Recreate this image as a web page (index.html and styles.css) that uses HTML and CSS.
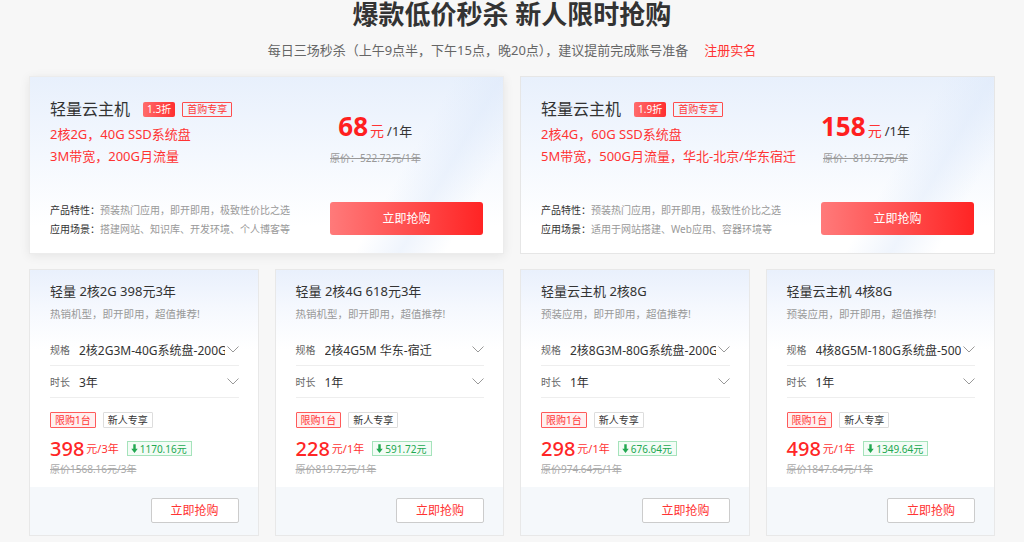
FILE: index.html
```html
<!DOCTYPE html>
<html>

<head>
    <meta charset="utf-8">
    <link rel="stylesheet" href="styles.css">
</head>

<body>
    <div class="page">
        <h1 class="title">爆款低价秒杀 新人限时抢购</h1>
        <p class="subtitle">每日三场秒杀（上午9点半，下午15点，晚20点），建议提前完成账号准备<a class="register">注册实名</a></p>

        <div class="big-row">
            <div class="big-card raised">
                <div class="big-info">
                    <div class="big-title">轻量云主机<span class="tag-fill">1.3折</span><span class="tag-line">首购专享</span></div>
                    <div class="spec">2核2G，40G SSD系统盘</div>
                    <div class="spec">3M带宽，200G月流量</div>
                </div>
                <div class="big-price">
                    <div class="price-now"><b>68</b><span class="unit">元</span><span class="per">/1年</span></div>
                    <div class="price-old">原价：522.72元/1年</div>
                </div>
                <div class="features">
                    <div><span class="feat-label">产品特性：</span>预装热门应用，即开即用，极致性价比之选</div>
                    <div><span class="feat-label">应用场景：</span>搭建网站、知识库、开发环境、个人博客等</div>
                </div>
                <a class="buy-main">立即抢购</a>
            </div>
            <div class="big-card">
                <div class="big-info">
                    <div class="big-title">轻量云主机<span class="tag-fill">1.9折</span><span class="tag-line">首购专享</span></div>
                    <div class="spec">2核4G，60G SSD系统盘</div>
                    <div class="spec">5M带宽，500G月流量，华北-北京/华东宿迁</div>
                </div>
                <div class="big-price">
                    <div class="price-now"><b>158</b><span class="unit">元</span><span class="per">/1年</span></div>
                    <div class="price-old">原价：819.72元/年</div>
                </div>
                <div class="features">
                    <div><span class="feat-label">产品特性：</span>预装热门应用，即开即用，极致性价比之选</div>
                    <div><span class="feat-label">应用场景：</span>适用于网站搭建、Web应用、容器环境等</div>
                </div>
                <a class="buy-main">立即抢购</a>
            </div>
        </div>

        <div class="small-row">
            <div class="small-card">
                <div class="small-body">
                    <div class="small-title">轻量 2核2G 398元3年</div>
                    <div class="small-desc">热销机型，即开即用，超值推荐!</div>
                    <div class="opt"><span class="opt-label">规格</span><span class="opt-value">2核2G3M-40G系统盘-200GB月流量</span><svg class="chev" viewBox="0 0 12 7"><polyline points="0.5,0.5 6,6 11.5,0.5" /></svg></div>
                    <div class="opt"><span class="opt-label">时长</span><span class="opt-value">3年</span><svg class="chev" viewBox="0 0 12 7"><polyline points="0.5,0.5 6,6 11.5,0.5" /></svg></div>
                    <div class="tags"><span class="tag-limit">限购1台</span><span class="tag-new">新人专享</span></div>
                    <div class="small-price"><b>398</b><span class="small-unit">元/3年</span><span class="save"><svg viewBox="0 0 8 10"><path d="M2.6 0h2.8v5.2h2.3L4 10 0.3 5.2h2.3z" /></svg>1170.16元</span></div>
                    <div class="small-old">原价1568.16元/3年</div>
                </div>
                <div class="small-foot"><a class="buy-small">立即抢购</a></div>
            </div>
            <div class="small-card">
                <div class="small-body">
                    <div class="small-title">轻量 2核4G 618元3年</div>
                    <div class="small-desc">热销机型，即开即用，超值推荐!</div>
                    <div class="opt"><span class="opt-label">规格</span><span class="opt-value">2核4G5M 华东-宿迁</span><svg class="chev" viewBox="0 0 12 7"><polyline points="0.5,0.5 6,6 11.5,0.5" /></svg></div>
                    <div class="opt"><span class="opt-label">时长</span><span class="opt-value">1年</span><svg class="chev" viewBox="0 0 12 7"><polyline points="0.5,0.5 6,6 11.5,0.5" /></svg></div>
                    <div class="tags"><span class="tag-limit">限购1台</span><span class="tag-new">新人专享</span></div>
                    <div class="small-price"><b>228</b><span class="small-unit">元/1年</span><span class="save"><svg viewBox="0 0 8 10"><path d="M2.6 0h2.8v5.2h2.3L4 10 0.3 5.2h2.3z" /></svg>591.72元</span></div>
                    <div class="small-old">原价819.72元/1年</div>
                </div>
                <div class="small-foot"><a class="buy-small">立即抢购</a></div>
            </div>
            <div class="small-card">
                <div class="small-body">
                    <div class="small-title">轻量云主机 2核8G</div>
                    <div class="small-desc">预装应用，即开即用，超值推荐!</div>
                    <div class="opt"><span class="opt-label">规格</span><span class="opt-value">2核8G3M-80G系统盘-200GB月流量</span><svg class="chev" viewBox="0 0 12 7"><polyline points="0.5,0.5 6,6 11.5,0.5" /></svg></div>
                    <div class="opt"><span class="opt-label">时长</span><span class="opt-value">1年</span><svg class="chev" viewBox="0 0 12 7"><polyline points="0.5,0.5 6,6 11.5,0.5" /></svg></div>
                    <div class="tags"><span class="tag-limit">限购1台</span><span class="tag-new">新人专享</span></div>
                    <div class="small-price"><b>298</b><span class="small-unit">元/1年</span><span class="save"><svg viewBox="0 0 8 10"><path d="M2.6 0h2.8v5.2h2.3L4 10 0.3 5.2h2.3z" /></svg>676.64元</span></div>
                    <div class="small-old">原价974.64元/1年</div>
                </div>
                <div class="small-foot"><a class="buy-small">立即抢购</a></div>
            </div>
            <div class="small-card">
                <div class="small-body">
                    <div class="small-title">轻量云主机 4核8G</div>
                    <div class="small-desc">预装应用，即开即用，超值推荐!</div>
                    <div class="opt"><span class="opt-label">规格</span><span class="opt-value">4核8G5M-180G系统盘-500GB月流量</span><svg class="chev" viewBox="0 0 12 7"><polyline points="0.5,0.5 6,6 11.5,0.5" /></svg></div>
                    <div class="opt"><span class="opt-label">时长</span><span class="opt-value">1年</span><svg class="chev" viewBox="0 0 12 7"><polyline points="0.5,0.5 6,6 11.5,0.5" /></svg></div>
                    <div class="tags"><span class="tag-limit">限购1台</span><span class="tag-new">新人专享</span></div>
                    <div class="small-price"><b>498</b><span class="small-unit">元/1年</span><span class="save"><svg viewBox="0 0 8 10"><path d="M2.6 0h2.8v5.2h2.3L4 10 0.3 5.2h2.3z" /></svg>1349.64元</span></div>
                    <div class="small-old">原价1847.64元/1年</div>
                </div>
                <div class="small-foot"><a class="buy-small">立即抢购</a></div>
            </div>
        </div>
    </div>
</body>

</html>
```

FILE: styles.css
```css
* {
    box-sizing: border-box;
}

html,
body {
    margin: 0;
    padding: 0;
    background: #f7f7f7;
    font-family: "Noto Sans", "Noto Sans CJK SC", sans-serif;
    color: #333;
}

.page {
    width: 966px;
    margin: 0 auto;
}

.title {
    margin: 0;
    font-size: 26px;
    line-height: 28px;
    font-weight: 700;
    text-align: center;
    color: #333;
}

.subtitle {
    margin: 12px 0 0 0;
    font-size: 13px;
    line-height: 20px;
    text-align: center;
    color: #666;
}

.register {
    color: #ff3333;
    margin-left: 16px;
}

/* top two cards */
.big-row {
    display: grid;
    grid-template-columns: minmax(0, 1fr) minmax(0, 1fr);
    gap: 16px;
    margin-top: 16px;
}

.big-card {
    display: grid;
    grid-template-columns: minmax(0, 1fr) 153px;
    column-gap: 20px;
    row-gap: 34px;
    padding: 21px 20px 14px 20px;
    border: 1px solid #e6e6e6;
    background:
        linear-gradient(120deg, rgba(255, 255, 255, 0) 74%, rgba(220, 232, 250, 0.45) 82%, rgba(255, 255, 255, 0) 90%),
        linear-gradient(180deg, #e8f0fc 0%, #f4f8fe 45%, #ffffff 85%);
}

.big-card.raised {
    border-color: #ececec;
    box-shadow: 0 2px 10px rgba(0, 0, 0, 0.08);
}

.big-title {
    display: flex;
    align-items: center;
    font-size: 16px;
    line-height: 22px;
    color: #333;
    margin-bottom: 3px;
}

.tag-fill {
    margin-left: 13px;
    padding: 0 4px;
    height: 15px;
    line-height: 15px;
    font-size: 10px;
    color: #fff;
    border-radius: 2px;
    background: linear-gradient(90deg, #ff6b6b, #ff2f2f);
}

.tag-line {
    margin-left: 7px;
    padding: 0 4px;
    height: 15px;
    line-height: 13px;
    font-size: 10px;
    color: #ff3333;
    border: 1px solid #ff4d4d;
    border-radius: 1px;
}

.spec {
    font-size: 13px;
    line-height: 22px;
    color: #ff3333;
    white-space: nowrap;
}

.big-price {
    margin-top: 13px;
    justify-self: start;
    text-align: center;
}

.price-now {
    line-height: 30px;
    white-space: nowrap;
}

.price-now b {
    font-size: 26px;
    font-weight: 700;
    color: #ff1f1f;
}

.unit {
    font-size: 14px;
    color: #ff3333;
    margin-left: 2px;
}

.per {
    font-size: 13px;
    color: #333;
    margin-left: 3px;
}

.price-old {
    margin-top: 4px;
    font-size: 10px;
    line-height: 16px;
    color: #999;
    text-decoration: line-through;
    white-space: nowrap;
}

.features {
    font-size: 10px;
    line-height: 19px;
    color: #999;
    white-space: nowrap;
    overflow: hidden;
}

.feat-label {
    color: #333;
}

.buy-main {
    display: block;
    margin-top: 1px;
    height: 33px;
    line-height: 33px;
    text-align: center;
    font-size: 12px;
    color: #fff;
    border-radius: 3px;
    background: linear-gradient(90deg, #ff7a7a, #ff2424);
}

/* bottom four cards */
.small-row {
    display: grid;
    grid-template-columns: repeat(4, minmax(0, 1fr));
    gap: 16px;
    margin-top: 15px;
}

.small-card {
    min-width: 0;
    border: 1px solid #e8e8e8;
    background: linear-gradient(180deg, #e9f0fc 0%, #f5f8fe 14%, #ffffff 30%);
}

.small-body {
    padding: 11px 19px 11px 20px;
}

.small-title {
    font-size: 13px;
    line-height: 20px;
    color: #333;
    white-space: nowrap;
}

.small-desc {
    margin-top: 5px;
    font-size: 10.5px;
    line-height: 16px;
    color: #999;
}

.opt {
    display: flex;
    align-items: center;
    height: 32px;
    border-bottom: 1px solid #eeeeee;
}

.small-desc + .opt {
    margin-top: 12px;
}

.opt-label {
    flex: none;
    width: 29px;
    font-size: 10px;
    color: #666;
}

.opt-value {
    flex: 1;
    min-width: 0;
    font-size: 12px;
    color: #333;
    white-space: nowrap;
    overflow: hidden;
}

.chev {
    flex: none;
    width: 12px;
    height: 7px;
    margin-left: 2px;
    fill: none;
    stroke: #999;
    stroke-width: 1;
}

.tags {
    display: flex;
    gap: 7px;
    margin-top: 14px;
}

.tags span {
    height: 16px;
    line-height: 14px;
    padding: 0 4px;
    font-size: 10px;
    border-radius: 1px;
}

.tag-limit {
    color: #ff3333;
    border: 1px solid #ff5a5a;
    background: #fff0f0;
}

.tag-new {
    color: #333;
    border: 1px solid #dddddd;
    background: #fff;
}

.small-price {
    display: flex;
    align-items: center;
    margin-top: 8px;
    height: 24px;
    white-space: nowrap;
}

.small-price b {
    font-size: 20px;
    font-weight: 500;
    color: #ff2626;
}

.small-unit {
    margin-left: 2px;
    font-size: 11px;
    color: #ff3333;
}

.save {
    display: flex;
    align-items: center;
    margin-left: 8px;
    height: 15px;
    padding: 0 4px 0 3px;
    font-size: 10px;
    color: #22a851;
    border: 1px solid #a5e3bb;
    background: #f3fcf6;
}

.save svg {
    width: 7px;
    height: 9px;
    margin-right: 2px;
    fill: #22a851;
}

.small-old {
    margin-top: 2px;
    font-size: 10px;
    line-height: 14px;
    color: #aaa;
    text-decoration: line-through;
}

.small-foot {
    display: flex;
    justify-content: flex-end;
    height: 48px;
    padding: 11px 19px 0 0;
    background: #f5f8fb;
}

.buy-small {
    width: 88px;
    height: 25px;
    line-height: 23px;
    text-align: center;
    font-size: 12px;
    color: #ff3333;
    background: #fff;
    border: 1px solid #cccccc;
    border-radius: 2px;
}
```
